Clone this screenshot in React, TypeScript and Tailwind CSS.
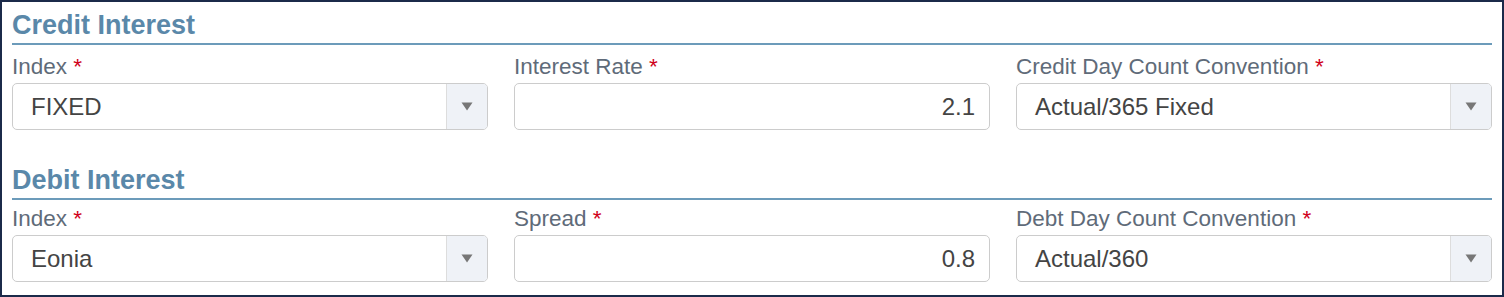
import React from "react"

type Field = {
  label: string
  value: string
  kind: "select" | "number"
}

const sections: { title: string; fields: Field[] }[] = [
  {
    title: "Credit Interest",
    fields: [
      { label: "Index", value: "FIXED", kind: "select" },
      { label: "Interest Rate", value: "2.1", kind: "number" },
      { label: "Credit Day Count Convention", value: "Actual/365 Fixed", kind: "select" },
    ],
  },
  {
    title: "Debit Interest",
    fields: [
      { label: "Index", value: "Eonia", kind: "select" },
      { label: "Spread", value: "0.8", kind: "number" },
      { label: "Debt Day Count Convention", value: "Actual/360", kind: "select" },
    ],
  },
]

function FormField({ field }: { field: Field }) {
  return (
    <div className="flex flex-col">
      <label className="text-[22.5px] leading-[26px] text-[#5f6b79]">
        {field.label} <span className="text-[#d0021b]">*</span>
      </label>
      <div className="mt-[3px] flex h-[47px] rounded-[5px] border border-[#cccccc] bg-white overflow-hidden">
        {field.kind === "select" ? (
          <>
            <div className="flex flex-1 items-center pl-[18px] text-[24px] text-[#444444]">{field.value}</div>
            <div className="flex w-[41px] items-center justify-center border-l border-[#dddddd] bg-[#eff2f7]">
              <svg width="12" height="9" viewBox="0 0 12 9">
                <path d="M0.5 0.5 H11.5 L6 8.5 Z" fill="#777777" />
              </svg>
            </div>
          </>
        ) : (
          <div className="flex flex-1 items-center justify-end pr-[14px] text-[24px] text-[#444444]">{field.value}</div>
        )}
      </div>
    </div>
  )
}

export default function App() {
  return (
    <div className="h-[297px] w-[1504px] border-2 border-[#1b2a4a] bg-white px-[10px] pt-[8px] font-['Liberation_Sans',Arial,sans-serif]">
      {sections.map((s, i) => (
        <div key={s.title} className={i > 0 ? "mt-[35px]" : ""}>
          <h2 className="border-b-2 border-[#6c9bba] pb-[3px] text-[27px] font-bold leading-[30px] text-[#5a88a9]">
            {s.title}
          </h2>
          <div className={`grid grid-cols-3 gap-x-[26px] ${i > 0 ? "mt-[6px]" : "mt-[9px]"}`}>
            {s.fields.map((f) => (
              <FormField key={f.label} field={f} />
            ))}
          </div>
        </div>
      ))}
    </div>
  )
}
